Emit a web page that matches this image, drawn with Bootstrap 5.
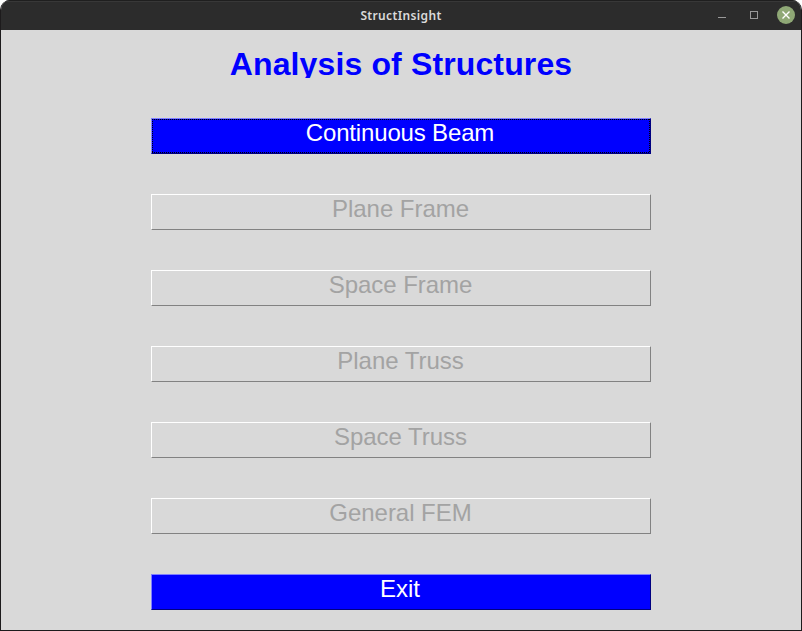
<!DOCTYPE html>
<html lang="en">
<head>
<meta charset="utf-8">
<title>StructInsight</title>
<link href="https://cdn.jsdelivr.net/npm/bootstrap@5.3.0/dist/css/bootstrap.min.css" rel="stylesheet">
<style>
body { background: #fff; font-family: "Liberation Sans", Arial, sans-serif; }
.app-window { background: #d9d9d9; border: 1px solid #1d1b1c; border-top: 0; border-radius: 10px 10px 0 0; }
.title-bar { height: 30px; background: #2c2c2c; border-top: 1px solid #1f1f1f; box-shadow: inset 0 1px #383838; color: #dadada; }
.window-title { font: 600 12px/30px "Noto Sans", "Open Sans", sans-serif; letter-spacing: .35px; }
.window-controls { top: 5px; right: 6px; line-height: 0; }
.screen-title { margin-top: 16px; height: 32px; font-size: 32px; line-height: 36px; letter-spacing: .13px; color: #00f; }
.menu-list { width: 500px; margin-top: 40px; gap: 40px; }
.menu-list .btn {
  height: 36px; padding: 0 1px 0 0; border: 1px solid; border-color: #fff #828282 #828282 #fff; border-radius: 0;
  font-size: 24px; line-height: 28px; letter-spacing: -.04px; background: #d9d9d9; color: #a3a3a3; opacity: 1;
}
.menu-list .btn.action { padding-right: 2px; background: #00f; color: #fff; border-color: #7f7fff #000080 #000080 #7f7fff; }
.menu-list .btn.current { letter-spacing: -.16px; }
</style>
</head>
<body class="vh-100 overflow-hidden">
<div class="app-window vh-100 overflow-hidden d-flex flex-column">
  <header class="title-bar position-relative flex-shrink-0 d-flex justify-content-center align-items-center">
    <span class="window-title">StructInsight</span>
    <div class="window-controls position-absolute">
      <svg width="84" height="20" viewBox="0 0 84 20" aria-hidden="true">
        <path d="M7 11.500h8" fill="none" stroke="#999"/>
        <rect x="39.500" y="5.500" width="7" height="7" fill="none" stroke="#999"/>
        <circle cx="75" cy="9" r="9" fill="#8fa876"/>
        <path d="M71.500 5.500l7 7m0-7l-7 7" fill="none" stroke="#fff" stroke-width="1.400"/>
      </svg>
    </div>
  </header>
  <main class="d-flex flex-column align-items-center">
    <h1 class="screen-title mb-0 fw-bold overflow-hidden text-nowrap">Analysis of Structures</h1>
    <div class="menu-list d-flex flex-column">
      <button class="btn action current position-relative d-flex justify-content-center" type="button">
        <svg class="position-absolute top-0 start-0" width="498" height="34" viewBox="0 0 498 34" aria-hidden="true">
          <path d="M0 .5h498M0 33.500h498M.5 0v34M497.500 0v34" fill="none" stroke="#000" stroke-dasharray="1 1" shape-rendering="crispEdges"/>
        </svg>
        <span>Continuous Beam</span>
      </button>
      <button class="btn d-flex justify-content-center" type="button" disabled>Plane Frame</button>
      <button class="btn d-flex justify-content-center" type="button" disabled>Space Frame</button>
      <button class="btn d-flex justify-content-center" type="button" disabled>Plane Truss</button>
      <button class="btn d-flex justify-content-center" type="button" disabled>Space Truss</button>
      <button class="btn d-flex justify-content-center" type="button" disabled>General FEM</button>
      <button class="btn action d-flex justify-content-center" type="button">Exit</button>
    </div>
  </main>
</div>
<script src="https://cdn.jsdelivr.net/npm/bootstrap@5.3.0/dist/js/bootstrap.bundle.min.js"></script>
</body>
</html>
